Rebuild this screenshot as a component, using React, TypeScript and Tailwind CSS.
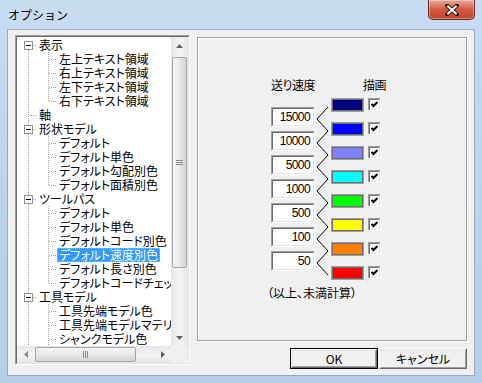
import React from "react";

type Cell = "pass" | "tee" | "corner" | "first";

type TreeRow = { label: string; cells: Cell[]; box?: boolean; selected?: boolean };

const rows: TreeRow[] = [
  { label: "表示", cells: ["first"], box: true },
  { label: "左上テキスト領域", cells: ["pass", "tee"] },
  { label: "右上テキスト領域", cells: ["pass", "tee"] },
  { label: "左下テキスト領域", cells: ["pass", "tee"] },
  { label: "右下テキスト領域", cells: ["pass", "corner"] },
  { label: "軸", cells: ["tee"] },
  { label: "形状モデル", cells: ["tee"], box: true },
  { label: "デフォルト", cells: ["pass", "tee"] },
  { label: "デフォルト単色", cells: ["pass", "tee"] },
  { label: "デフォルト勾配別色", cells: ["pass", "tee"] },
  { label: "デフォルト面積別色", cells: ["pass", "corner"] },
  { label: "ツールパス", cells: ["tee"], box: true },
  { label: "デフォルト", cells: ["pass", "tee"] },
  { label: "デフォルト単色", cells: ["pass", "tee"] },
  { label: "デフォルトコード別色", cells: ["pass", "tee"] },
  { label: "デフォルト速度別色", cells: ["pass", "tee"], selected: true },
  { label: "デフォルト長さ別色", cells: ["pass", "tee"] },
  { label: "デフォルトコードチェック", cells: ["pass", "corner"] },
  { label: "工具モデル", cells: ["tee"], box: true },
  { label: "工具先端モデル色", cells: ["pass", "tee"] },
  { label: "工具先端モデルマテリアル", cells: ["pass", "tee"] },
  { label: "シャンクモデル色", cells: ["pass", "tee"] },
];

const speeds = ["15000", "10000", "5000", "1000", "500", "100", "50"];
const swatches = ["#000080", "#0000ff", "#8080ff", "#00ffff", "#00ff00", "#ffff00", "#ff8000", "#ff0000"];

function LineCell({ kind, box }: { kind: Cell; box?: boolean }) {
  const dot = { stroke: "#a0a0a0", strokeDasharray: "1 1" };
  return (
    <svg width="20" height="14" className="shrink-0" shapeRendering="crispEdges">
      {(kind === "pass" || kind === "tee") && <line x1="10.5" y1="0" x2="10.5" y2="14" {...dot} />}
      {kind === "corner" && <line x1="10.5" y1="0" x2="10.5" y2="8" {...dot} />}
      {kind === "first" && <line x1="10.5" y1="8" x2="10.5" y2="14" {...dot} />}
      {kind !== "pass" && <line x1="11" y1="7.5" x2="19" y2="7.5" {...dot} />}
      {box && (
        <>
          <rect x="6.5" y="3.5" width="8" height="8" fill="#fff" stroke="#919191" />
          <line x1="8" y1="7.5" x2="13" y2="7.5" stroke="#000" />
        </>
      )}
    </svg>
  );
}

function Arrow({ dir, color = "#606060" }: { dir: "up" | "down" | "left" | "right"; color?: string }) {
  const pts = {
    up: "0,4 7,4 3.5,0",
    down: "0,0 7,0 3.5,4",
    left: "4,0 4,7 0,3.5",
    right: "0,0 0,7 4,3.5",
  }[dir];
  const vertical = dir === "up" || dir === "down";
  return (
    <svg width={vertical ? 7 : 4} height={vertical ? 4 : 7}>
      <polygon points={pts} fill={color} />
    </svg>
  );
}

function Tree() {
  return (
    <div className="w-[175px] h-[330px] border border-t-[#a0a0a0] border-l-[#a0a0a0] border-b-white border-r-white">
      <div className="w-full h-full border border-t-[#696969] border-l-[#696969] border-b-[#e3e3e3] border-r-[#e3e3e3] bg-white flex flex-col">
        <div className="flex flex-1 min-h-0">
          <div className="w-[154px] overflow-hidden pt-[1px] pl-[1px]">
            {rows.map((r, i) => (
              <div key={i} className="flex h-[14px] items-center">
                {r.cells.map((c, j) => (
                  <LineCell key={j} kind={c} box={r.box && j === r.cells.length - 1} />
                ))}
                <span
                  className={
                    r.selected
                      ? "ml-[-1px] px-[2px] h-[14px] leading-[13px] whitespace-nowrap bg-[#3399ff] text-white outline-1 outline-dotted outline-[#f0b060] -outline-offset-1"
                      : "ml-[-1px] px-[2px] h-[14px] leading-[13px] whitespace-nowrap text-black"
                  }
                >
                  {r.label}
                </span>
              </div>
            ))}
          </div>
          {/* vertical scrollbar */}
          <div className="w-[17px] flex flex-col bg-gradient-to-r from-[#e6e6e6] via-[#f4f4f4] to-[#e6e6e6]">
            <div className="h-[17px] flex items-center justify-center">
              <Arrow dir="up" />
            </div>
            <div className="flex-1 flex flex-col">
              <div className="mt-[3px] mx-[1px] h-[211px] rounded-[2px] border border-[#a5a5a5] bg-gradient-to-r from-[#f6f6f6] via-[#e8e8e8] to-[#d4d4d4] flex flex-col items-center justify-center gap-[1px]">
                <div className="w-[7px] h-[1px] bg-[#8a8a8a]" />
                <div className="w-[7px] h-[1px] bg-[#8a8a8a]" />
                <div className="w-[7px] h-[1px] bg-[#8a8a8a]" />
              </div>
            </div>
            <div className="h-[17px] flex items-center justify-center">
              <Arrow dir="down" />
            </div>
          </div>
        </div>
        {/* horizontal scrollbar */}
        <div className="h-[17px] flex">
          <div className="w-[154px] flex bg-gradient-to-b from-[#e6e6e6] via-[#f4f4f4] to-[#e6e6e6]">
            <div className="w-[17px] flex items-center justify-center">
              <Arrow dir="left" color="#8a8a8a" />
            </div>
            <div className="flex-1 flex items-center">
              <div className="ml-[1px] w-[101px] h-[15px] rounded-[2px] border border-[#a5a5a5] bg-gradient-to-b from-[#f6f6f6] via-[#e8e8e8] to-[#d4d4d4] flex items-center justify-center gap-[1px]">
                <div className="w-[1px] h-[7px] bg-[#8a8a8a]" />
                <div className="w-[1px] h-[7px] bg-[#8a8a8a]" />
                <div className="w-[1px] h-[7px] bg-[#8a8a8a]" />
              </div>
            </div>
            <div className="w-[17px] flex items-center justify-center">
              <Arrow dir="right" />
            </div>
          </div>
          <div className="w-[17px] bg-[#f0f0f0]" />
        </div>
      </div>
    </div>
  );
}

function Sunken({ className, children }: { className: string; children?: React.ReactNode }) {
  return (
    <div className={`border border-t-[#a0a0a0] border-l-[#a0a0a0] border-b-white border-r-white ${className}`}>
      <div className="w-full h-full border border-t-[#696969] border-l-[#696969] border-b-[#e3e3e3] border-r-[#e3e3e3] bg-white flex items-center justify-end pr-[3px]">
        {children}
      </div>
    </div>
  );
}

function Zigzag() {
  const pts: string[] = [];
  for (let k = 0; k < 8; k++) {
    pts.push(`13,${9 + 24 * k}`);
    if (k < 7) pts.push(`2,${21 + 24 * k}`);
  }
  return (
    <svg width="16" height="182" className="shrink-0">
      <polyline points={pts.join(" ")} fill="none" stroke="#000" strokeWidth="1" />
    </svg>
  );
}

function CheckBox() {
  return (
    <div className="w-[13px] h-[13px] border border-t-[#a0a0a0] border-l-[#a0a0a0] border-b-white border-r-white">
      <div className="w-full h-full border border-t-[#696969] border-l-[#696969] border-b-[#e3e3e3] border-r-[#e3e3e3] bg-white">
        <svg width="9" height="9" className="block">
          <polyline points="1.5,4 3.5,6 7.5,2" fill="none" stroke="#000" strokeWidth="2" />
        </svg>
      </div>
    </div>
  );
}

function Button({ label, isDefault }: { label: string; isDefault?: boolean }) {
  return (
    <div className={isDefault ? "w-[88px] h-[21px] border border-black" : "w-[88px] h-[21px]"}>
      <div className="w-full h-full border border-t-white border-l-white border-b-[#696969] border-r-[#696969]">
        <div className="w-full h-full border border-t-[#e3e3e3] border-l-[#e3e3e3] border-b-[#a0a0a0] border-r-[#a0a0a0] bg-[#f0f0f0] flex items-center justify-center text-[12px] leading-[14px] text-black">
          {label}
        </div>
      </div>
    </div>
  );
}

export default function App() {
  return (
    <div className="w-[482px] h-[383px] overflow-hidden bg-gradient-to-b from-[#c8dcf2] via-[#bdd3ec] to-[#b7cee9] font-['Noto_Sans_CJK_JP','Noto_Sans',sans-serif] [font-feature-settings:'palt'] flex flex-col">
      {/* title bar */}
      <div className="h-[30px] flex items-start justify-between">
        <span className="ml-[8px] mt-[7px] text-[12px] leading-[16px] text-black [font-feature-settings:normal]">
          オプション
        </span>
        <div className="mr-[7px] w-[47px] h-[20px] rounded-b-[5px] border border-t-0 border-[#6b2a20] bg-gradient-to-b from-[#e8a898] via-[#d2583f] to-[#c3462f] flex items-center justify-center shadow-[inset_0_0_0_1px_rgba(255,255,255,0.35)]">
          <svg width="14" height="12" viewBox="0 0 14 12">
            <path d="M2 1.5 L12 10.5 M12 1.5 L2 10.5" stroke="#4a1a12" strokeWidth="4" strokeLinecap="square" />
            <path d="M2.5 2 L11.5 10 M11.5 2 L2.5 10" stroke="#fff" strokeWidth="2" />
          </svg>
        </div>
      </div>

      {/* client area */}
      <div className="ml-[8px] w-[466px] h-[345px] bg-[#f0f0f0] shadow-[0_0_0_1px_#93a9c4] flex pl-[7px] pt-[5px] text-[12px] text-black">
        <Tree />
        <div className="ml-[7px] mt-[2px] flex flex-col">
          <div className="w-[270px] h-[304px] border border-[#a0a0a0] shadow-[inset_1px_1px_0_#fff,1px_1px_0_#fff] pl-[73px] pt-[40px] flex flex-col">
            <div className="flex leading-[14px]">
              <span className="w-[92px] tracking-[-0.5px]">送り速度</span>
              <span className="tracking-[-0.5px]">描画</span>
            </div>
            <div className="mt-[6px] flex items-start">
              <div className="pt-[9px] flex flex-col gap-[4px]">
                {speeds.map((s) => (
                  <Sunken key={s} className="w-[44px] h-[20px]">
                    <span className="font-['Liberation_Sans',sans-serif] text-[12px] tracking-[-0.6px] leading-[14px]">{s}</span>
                  </Sunken>
                ))}
              </div>
              <Zigzag />
              <div className="flex flex-col gap-[10px]">
                {swatches.map((c) => (
                  <div key={c} className="flex items-start">
                    <div className="w-[33px] h-[14px] border border-[#a0a0a0] shadow-[inset_0_0_0_1px_#6e6e6e]" style={{ backgroundColor: c }} />
                    <div className="ml-[4px]">
                      <CheckBox />
                    </div>
                  </div>
                ))}
              </div>
            </div>
            <span className="mt-[6px] ml-[-4px] leading-[14px]">（以上、未満計算）</span>
          </div>
          <div className="mt-[7px] flex justify-end gap-[1px]">
            <Button label="OK" isDefault />
            <Button label="キャンセル" />
          </div>
        </div>
      </div>
    </div>
  );
}
